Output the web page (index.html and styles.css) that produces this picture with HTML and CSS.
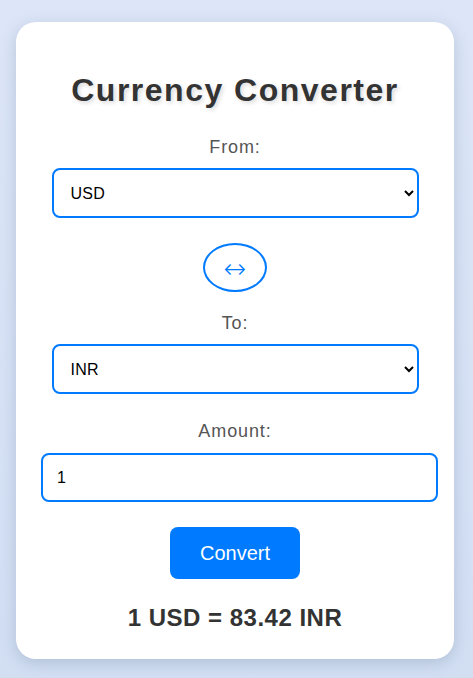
FILE: index.html
```html
<!DOCTYPE html>
<html lang="en">
<head>
<meta charset="utf-8">
<title>Currency Converter</title>
<link rel="stylesheet" href="styles.css">
</head>
<body>
  <main class="card">
    <h1 class="title">Currency Converter</h1>
    <label class="label" for="from">From:</label>
    <select id="from" class="select">
      <option>USD</option>
      <option>EUR</option>
      <option>INR</option>
    </select>
    <button class="swap" type="button">↔</button>
    <label class="label label-to" for="to">To:</label>
    <select id="to" class="select">
      <option>INR</option>
      <option>USD</option>
      <option>EUR</option>
    </select>
    <label class="label label-amount" for="amount">Amount:</label>
    <input id="amount" class="amount" type="number" value="1">
    <button class="convert" type="button">Convert</button>
    <p class="result">1 USD = 83.42 INR</p>
  </main>
</body>
</html>
```
FILE: styles.css
```css
* { box-sizing: border-box; }
html, body { height: 100%; }
body {
  margin: 0;
  padding: 22px 19px 19px 16px;
  font-family: "Liberation Sans", Arial, sans-serif;
  background: linear-gradient(180deg, #dde6f8 0%, #d2dff3 100%);
}
.card {
  width: 438px;
  height: 637px;
  background: #fff;
  border-radius: 20px;
  box-shadow: 0 4px 16px rgba(60, 80, 120, 0.22);
  padding: 0 16px 0 25px;
  display: flex;
  flex-direction: column;
  align-items: center;
}
.title {
  margin: 50px 0 0 -9px;
  font-size: 32px;
  line-height: 37px;
  font-weight: bold;
  letter-spacing: 1.5px;
  color: #333;
  text-shadow: 2px 2px 4px rgba(0, 0, 0, 0.15);
}
.label {
  display: block;
  margin: 28px 0 0 -9px;
  font-size: 18px;
  line-height: 21px;
  letter-spacing: 0.9px;
  color: #555;
}
.label-to { margin-top: 21px; }
.label-amount { margin-top: 27px; }
.select {
  margin: 10px 0 0 -9px;
  width: 367px;
  height: 50px;
  padding: 0 0 0 13px;
  border: 2px solid #007bff;
  border-radius: 8px;
  background: #fff;
  font-family: "Liberation Sans", Arial, sans-serif;
  font-size: 16px;
  letter-spacing: 0.3px;
  color: #000;
}
.swap {
  margin: 25px 0 0 -9px;
  width: 64px;
  height: 49px;
  border: 2px solid #007bff;
  border-radius: 50%;
  background: #fff;
  color: #007bff;
  font-family: "DejaVu Sans", sans-serif;
  font-weight: 200;
  font-size: 27px;
  line-height: 1;
  padding: 2px 0 0;
}
.amount {
  align-self: flex-start;
  margin-top: 11px;
  width: 397px;
  height: 49px;
  padding: 0 14px;
  border: 2px solid #007bff;
  border-radius: 8px;
  font-family: "Liberation Sans", Arial, sans-serif;
  font-size: 16px;
  color: #000;
  outline: none;
}
.amount::-webkit-inner-spin-button,
.amount::-webkit-outer-spin-button { -webkit-appearance: none; margin: 0; }
.convert {
  margin: 25px 0 0 -9px;
  width: 130px;
  height: 52px;
  border: none;
  border-radius: 8px;
  background: #007bff;
  color: #fff;
  font-family: "Liberation Sans", Arial, sans-serif;
  font-size: 20px;
}
.result {
  margin: 25px 0 0 -9px;
  font-size: 24px;
  line-height: 28px;
  font-weight: bold;
  letter-spacing: 0.5px;
  color: #333;
}
```
